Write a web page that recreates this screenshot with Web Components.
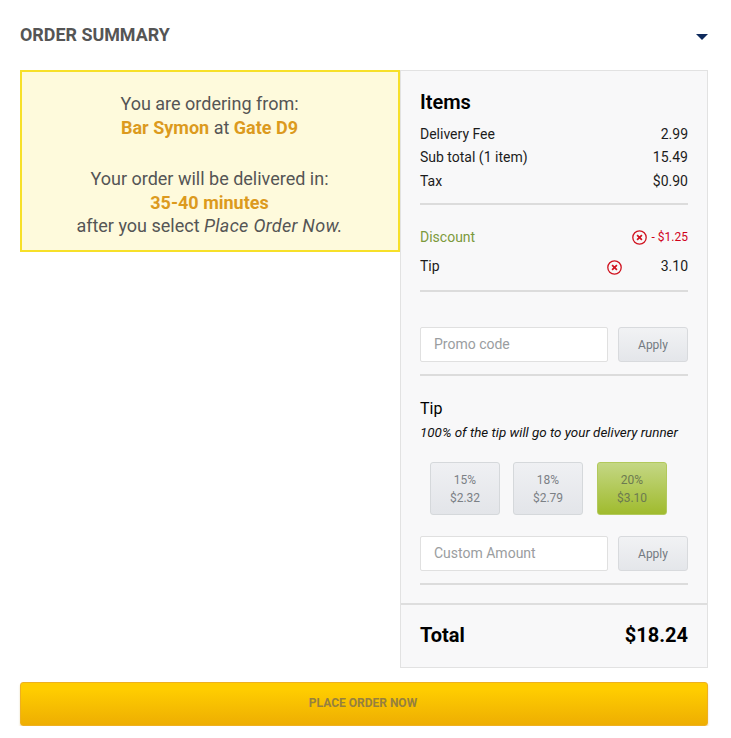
<!DOCTYPE html>
<html>
<head>
<meta charset="utf-8">
<title>Order summary</title>
<style>
  html, body { margin: 0; padding: 0; background: #fff; }
  body { font-family: Roboto, "Liberation Sans", sans-serif; }
</style>
</head>
<body>

<template id="summary-page-tpl">
  <style>
    :host {
      display: block;
      width: 688px;
      padding: 0 23px 0 20px;
    }
    .head {
      height: 70px;
      display: flex;
      justify-content: space-between;
      align-items: center;
      box-sizing: border-box;
    }
    h1 {
      margin: 0;
      font-size: 17.9px;
      line-height: 24px;
      font-weight: 700;
      color: #555;
      text-transform: uppercase;
    }
    .caret {
      width: 0;
      height: 0;
      margin-top: 4px;
      border-left: 6px solid transparent;
      border-right: 6px solid transparent;
      border-top: 6px solid #0e2a5c;
    }
    .cols {
      display: flex;
      align-items: flex-start;
    }
    ::slotted(delivery-note) { flex: 0 0 380px; }
    ::slotted(cart-panel) { flex: 0 0 308px; }
    .foot { margin-top: 14px; }
  </style>
  <div class="head">
    <h1>Order Summary</h1>
    <span class="caret"></span>
  </div>
  <div class="cols"><slot></slot></div>
  <div class="foot"><slot name="foot"></slot></div>
</template>

<template id="delivery-note-tpl">
  <style>
    :host {
      display: block;
      box-sizing: border-box;
      height: 182px;
      padding: 20px 11px 0 10px;
      background: #fefadc;
      border: 2px solid #f7e029;
      text-align: center;
      font-size: 18px;
      line-height: 23.5px;
      color: #555;
    }
    b { color: #dc9a1e; font-weight: 700; }
    p { margin: 0 0 28px; }
    p:last-child { margin: 0; }
    i { font-weight: 400; letter-spacing: .3px; }
  </style>
  <p>You are ordering from:<br><b>Bar Symon</b> at <b>Gate D9</b></p>
  <p>Your order will be delivered in:<br><b>35-40 minutes</b><br>after you select <i>Place Order Now.</i></p>
</template>

<template id="price-row-tpl">
  <style>
    :host {
      display: flex;
      align-items: center;
      justify-content: space-between;
      height: 23.5px;
      font-size: 14px;
      color: #1c1c1c;
    }
    :host([discount]) .label { color: #7c9a3c; }
    :host([discount]) .value { color: #d0021b; font-size: 12px; }
    .value { display: flex; align-items: center; }
  </style>
  <span class="label"><slot name="label"></slot></span>
  <span class="value"><slot name="icon"></slot><slot></slot></span>
</template>

<template id="remove-icon-tpl">
  <style>
    :host { display: block; width: 15px; height: 15px; }
    svg { display: block; }
  </style>
  <svg width="15" height="15" viewBox="0 0 15 15" fill="none" stroke="#d0121f">
    <circle cx="7.5" cy="7.5" r="6.7" stroke-width="1.3"/>
    <path d="M5.1 5.1l4.8 4.8M9.9 5.1l-4.8 4.8" stroke-width="1.7"/>
  </svg>
</template>

<template id="apply-field-tpl">
  <style>
    :host {
      display: flex;
      justify-content: space-between;
      height: 35px;
      font-size: 14px;
    }
    .field {
      box-sizing: border-box;
      width: 188px;
      height: 35px;
      padding-left: 13px;
      line-height: 32px;
      background: #fff;
      border: 1px solid #e0e0e0;
      border-radius: 2px;
      color: #9a9da0;
    }
    .btn {
      box-sizing: border-box;
      width: 70px;
      height: 35px;
      line-height: 35px;
      text-align: center;
      font-size: 12px;
      color: #737a80;
      background: linear-gradient(#f1f2f4, #e4e6ea);
      border: 1px solid #d8dadd;
      border-radius: 3px;
    }
  </style>
  <div class="field"><slot></slot></div>
  <div class="btn">Apply</div>
</template>

<template id="tip-choice-tpl">
  <style>
    :host {
      display: block;
      box-sizing: border-box;
      width: 70px;
      height: 53px;
      padding-top: 8px;
      text-align: center;
      font-size: 12px;
      line-height: 18px;
      color: #7b8085;
      background: linear-gradient(#eff0f3, #e3e5e9);
      border: 1px solid #d5d8db;
      border-radius: 3px;
    }
    :host([active]) {
      margin-left: 1px;
      color: #6c7a50;
      background: linear-gradient(#c4d784, #a0bb2e);
      border-color: #b2c95c;
    }
  </style>
  <slot></slot>
</template>

<template id="cart-panel-tpl">
  <style>
    :host {
      display: block;
      box-sizing: border-box;
      height: 598px;
      background: #f8f8f9;
      border: 1px solid #e2e2e2;
      color: #111;
    }
    .body { padding: 0 19px; }
    h2 {
      margin: 0;
      padding-top: 18px;
      height: 51px;
      box-sizing: border-box;
      font-size: 20px;
      line-height: 26px;
      font-weight: 600;
      color: #000;
    }
    hr {
      border: 0;
      height: 2px;
      margin: 0;
      background: #dcdcdc;
    }
    .rows { height: 70.5px; }
    .adj { padding-top: 21px; height: 85px; box-sizing: border-box; }
    .gap { height: 35px; }
    h3 {
      margin: 0;
      padding-top: 22px;
      font-size: 16px;
      line-height: 22px;
      font-weight: 400;
      color: #000;
    }
    .note {
      margin: 4px 0 0;
      font-size: 13.4px;
      line-height: 18px;
      font-style: italic;
      color: #111;
    }
    .tips {
      display: flex;
      gap: 13px;
      padding: 20px 0 21px 10px;
    }
    .total {
      display: flex;
      justify-content: space-between;
      align-items: center;
      box-sizing: border-box;
      height: 65px;
      margin-top: 18px;
      padding: 0 19px 2px;
      border-top: 2px solid #dedede;
      font-size: 20px;
      font-weight: 700;
      color: #000;
    }
  </style>
  <div class="body">
    <h2>Items</h2>
    <div class="rows"><slot name="rows"></slot></div>
    <hr style="margin-top:10px">
    <div class="adj"><slot name="adj"></slot></div>
    <hr>
    <div class="gap"></div>
    <slot name="promo"></slot>
    <hr style="margin-top:12px">
    <h3>Tip</h3>
    <p class="note">100% of the tip will go to your delivery runner</p>
    <div class="tips"><slot name="tips"></slot></div>
    <slot name="custom"></slot>
    <hr style="margin-top:12px">
  </div>
  <div class="total"><span>Total</span><span>$18.24</span></div>
</template>

<template id="place-order-tpl">
  <style>
    :host {
      display: block;
      box-sizing: border-box;
      height: 44px;
      padding-right: 2px;
      line-height: 41px;
      text-align: center;
      font-size: 12px;
      font-weight: 700;
      color: #96803f;
      text-transform: uppercase;
      background: linear-gradient(#ffcd00 15%, #eeae02);
      border: 1px solid #eeb020;
      border-radius: 3px;
      box-shadow: 0 2px 2px rgba(200, 170, 90, .45);
    }
  </style>
  <slot></slot>
</template>

<summary-page>
  <delivery-note></delivery-note>
  <cart-panel>
    <price-row slot="rows"><span slot="label">Delivery Fee</span>2.99</price-row>
    <price-row slot="rows"><span slot="label">Sub total (1 item)</span>15.49</price-row>
    <price-row slot="rows"><span slot="label">Tax</span>$0.90</price-row>
    <price-row slot="adj" discount><span slot="label">Discount</span><remove-icon slot="icon" style="margin-right:5px"></remove-icon>- $1.25</price-row>
    <price-row slot="adj" tip style="margin-top:5px"><span slot="label">Tip</span><remove-icon slot="icon" style="margin:3px 39px 0 0"></remove-icon>3.10</price-row>
    <apply-field slot="promo">Promo code</apply-field>
    <tip-choice slot="tips">15%<br>$2.32</tip-choice>
    <tip-choice slot="tips">18%<br>$2.79</tip-choice>
    <tip-choice slot="tips" active>20%<br>$3.10</tip-choice>
    <apply-field slot="custom">Custom Amount</apply-field>
  </cart-panel>
  <place-order slot="foot">Place Order Now</place-order>
</summary-page>

<script>
  function fromTemplate(id) {
    return class extends HTMLElement {
      constructor() {
        super();
        let template = document.querySelector('#' + id);
        let shadow = this.attachShadow({ mode: 'open' });
        shadow.appendChild(document.importNode(template.content, true));
      }
    };
  }

  customElements.define('summary-page', fromTemplate('summary-page-tpl'));
  customElements.define('delivery-note', fromTemplate('delivery-note-tpl'));
  customElements.define('price-row', fromTemplate('price-row-tpl'));
  customElements.define('remove-icon', fromTemplate('remove-icon-tpl'));
  customElements.define('apply-field', fromTemplate('apply-field-tpl'));
  customElements.define('tip-choice', fromTemplate('tip-choice-tpl'));
  customElements.define('cart-panel', fromTemplate('cart-panel-tpl'));
  customElements.define('place-order', fromTemplate('place-order-tpl'));
</script>
</body>
</html>
